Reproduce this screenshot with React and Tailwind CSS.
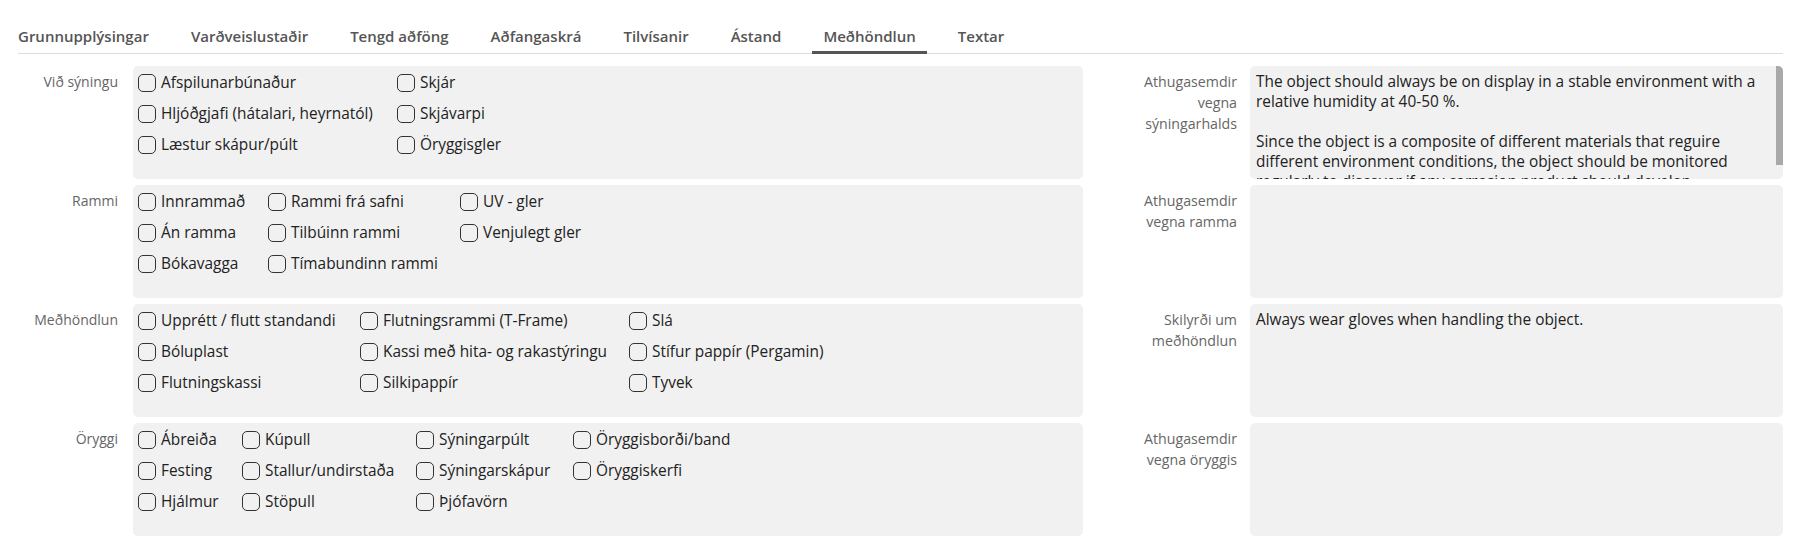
import React from 'react';

const tabs = [
  'Grunnupplýsingar',
  'Varðveislustaðir',
  'Tengd aðföng',
  'Aðfangaskrá',
  'Tilvísanir',
  'Ástand',
  'Meðhöndlun',
  'Textar',
];

const sections = [
  {
    label: 'Við sýningu',
    cols: 'grid-cols-[259px_auto]',
    rows: [
      ['Afspilunarbúnaður', 'Skjár'],
      ['Hljóðgjafi (hátalari, heyrnatól)', 'Skjávarpi'],
      ['Læstur skápur/púlt', 'Öryggisgler'],
    ],
    noteLabel: 'Athugasemdir vegna sýningarhalds',
    note:
      'The object should always be on display in a stable environment with a relative humidity at 40-50 %.\n\nSince the object is a composite of different materials that reguire different environment conditions, the object should be monitored regularly to discover if any corrosion product should develop.',
    scroll: true,
  },
  {
    label: 'Rammi',
    cols: 'grid-cols-[130px_192px_auto]',
    rows: [
      ['Innrammað', 'Rammi frá safni', 'UV - gler'],
      ['Án ramma', 'Tilbúinn rammi', 'Venjulegt gler'],
      ['Bókavagga', 'Tímabundinn rammi', null],
    ],
    noteLabel: 'Athugasemdir vegna ramma',
    note: '',
  },
  {
    label: 'Meðhöndlun',
    cols: 'grid-cols-[222px_269px_auto]',
    rows: [
      ['Upprétt / flutt standandi', 'Flutningsrammi (T-Frame)', 'Slá'],
      ['Bóluplast', 'Kassi með hita- og rakastýringu', 'Stífur pappír (Pergamin)'],
      ['Flutningskassi', 'Silkipappír', 'Tyvek'],
    ],
    noteLabel: 'Skilyrði um meðhöndlun',
    note: 'Always wear gloves when handling the object.',
  },
  {
    label: 'Öryggi',
    cols: 'grid-cols-[104px_174px_157px_auto]',
    rows: [
      ['Ábreiða', 'Kúpull', 'Sýningarpúlt', 'Öryggisborði/band'],
      ['Festing', 'Stallur/undirstaða', 'Sýningarskápur', 'Öryggiskerfi'],
      ['Hjálmur', 'Stöpull', 'Þjófavörn', null],
    ],
    noteLabel: 'Athugasemdir vegna öryggis',
    note: '',
  },
];

const Check = ({ text }) => (
  <label className="flex items-center gap-[5px] whitespace-nowrap text-[15.4px] leading-[20px] text-[#222]">
    <input
      type="checkbox"
      className="h-[18px] w-[18px] shrink-0 appearance-none rounded-[5px] border border-[#333] bg-transparent"
    />
    {text}
  </label>
);

const Section = ({ section }) => (
  <div className="flex h-[113px]">
    <div className="w-[118px] shrink-0 pt-[5px] text-right text-[14px] leading-[21px] text-[#666]">
      {section.label}
    </div>
    <div className="ml-[15px] w-[950px] shrink-0 rounded-[5px] bg-[#f1f1f1] pl-[5px] pt-[4px]">
      <div className={`grid ${section.cols} auto-rows-[26px] gap-y-[5px]`}>
        {section.rows.flat().map((item, i) =>
          item ? <Check key={i} text={item} /> : <div key={i} />
        )}
      </div>
    </div>
    <div className="w-[154px] shrink-0 pl-[40px] pt-[5px] text-right text-[14.2px] leading-[21px] text-[#666]">
      {section.noteLabel}
    </div>
    <div className="relative ml-[13px] flex-1 overflow-hidden rounded-[5px] bg-[#f1f1f1]">
      <textarea
        readOnly
        value={section.note}
        className="h-full w-full resize-none overflow-hidden bg-transparent pl-[6px] pr-[16px] pt-[6px] text-[15.4px] leading-[20px] text-[#222] outline-none"
      />
      {section.scroll && (
        <div className="absolute right-0 top-0 h-[99px] w-[7px] bg-[#a9a9a9]" />
      )}
    </div>
  </div>
);

export default function App() {
  return (
    <div className="min-h-[547px] bg-white pr-[20px] font-['Open_Sans',sans-serif]">
      <nav className="ml-[18px] flex border-b border-[#dcdcdc] pt-[26px]">
        <div className="-ml-[11px] flex gap-[20px]">
          {tabs.map((tab) => (
            <button
              key={tab}
              type="button"
              className={`-mb-px border-b-[3px] px-[11px] pb-[5px] text-[15px] font-semibold leading-[20px] text-[#555] ${
                tab === 'Meðhöndlun' ? 'border-[#555]' : 'border-transparent'
              }`}
            >
              {tab}
            </button>
          ))}
        </div>
      </nav>
      <div className="mt-[12px] flex flex-col gap-[6px]">
        {sections.map((s) => (
          <Section key={s.label} section={s} />
        ))}
      </div>
    </div>
  );
}
